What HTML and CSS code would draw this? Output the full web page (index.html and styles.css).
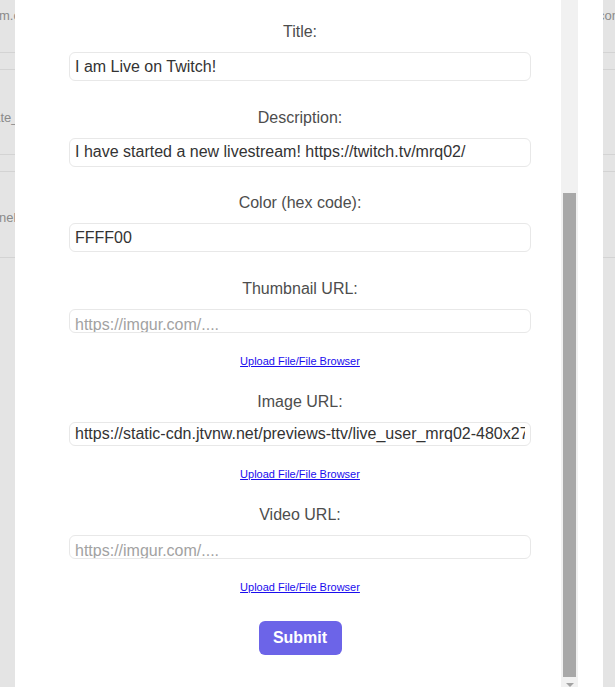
FILE: index.html
```html
<!DOCTYPE html>
<html lang="en">
<head>
    <meta charset="UTF-8">
    <meta name="viewport" content="width=device-width, initial-scale=1.0">
    <title>Go Live Notification</title>
    <link rel="stylesheet" href="styles.css">
</head>
<body>

    <!-- Notification list behind the modal -->
    <div class="page">
        <div class="row row-first">
            <div class="cell cell-left"><span>mrq02.stream.com</span></div>
            <div class="cell cell-right"><span>community</span></div>
        </div>
        <div class="row">
            <div class="cell cell-left"><span>go_live_template_live</span></div>
        </div>
        <div class="row row-last">
            <div class="cell cell-left"><span>stream_channel_url</span></div>
        </div>
    </div>

    <!-- Edit embed modal -->
    <div class="overlay">
        <div class="modal">
            <div class="modal-body">
                <form class="embed-form" id="embedForm">
                    <div class="field">
                        <label for="title">Title:</label>
                        <input class="text-input" type="text" id="title" name="title" value="I am Live on Twitch!">
                    </div>

                    <div class="field">
                        <label for="description">Description:</label>
                        <input class="text-input" type="text" id="description" name="description" value="I have started a new livestream! https://twitch.tv/mrq02/">
                    </div>

                    <div class="field">
                        <label for="color">Color (hex code):</label>
                        <input class="text-input" type="text" id="color" name="color" value="FFFF00">
                    </div>

                    <div class="field field-upload">
                        <label for="thumbnail">Thumbnail URL:</label>
                        <textarea class="url-input" id="thumbnail" name="thumbnail" rows="1" placeholder="https://imgur.com/...."></textarea>
                        <a class="upload-link" href="#">Upload File/File Browser</a>
                    </div>

                    <div class="field field-upload">
                        <label for="image">Image URL:</label>
                        <input class="url-input url-filled" type="text" id="image" name="image" value="https://static-cdn.jtvnw.net/previews-ttv/live_user_mrq02-480x270.jpg">
                        <a class="upload-link" href="#">Upload File/File Browser</a>
                    </div>

                    <div class="field field-upload">
                        <label for="video">Video URL:</label>
                        <textarea class="url-input" id="video" name="video" rows="1" placeholder="https://imgur.com/...."></textarea>
                        <a class="upload-link" href="#">Upload File/File Browser</a>
                    </div>

                    <button class="submit-button" type="submit">Submit</button>
                </form>
            </div>

            <!-- scrollbar of the modal, scrolled to the bottom -->
            <div class="scrollbar">
                <div class="thumb"></div>
                <div class="arrow-down"></div>
            </div>
        </div>
    </div>

</body>
</html>
```

FILE: styles.css
```css
body {
    font-family: "Liberation Sans", Arial, sans-serif;
    margin: 0;
    background-color: #e4e4e4;
    height: 100vh;
    overflow: hidden;
}

/* List rows behind the overlay */
.row {
    display: flex;
    justify-content: space-between;
    min-height: 86px;
    border-top: 1px solid #d3d3d3;
    border-bottom: 1px solid #d3d3d3;
    margin-bottom: 16px;
    padding-top: 40px;
    box-sizing: border-box;
    font-size: 13px;
    line-height: 16px;
    color: #8a8a8a;
}

.row-first {
    min-height: 53px;
    border-top: none;
    padding-top: 8px;
}

.row-last {
    padding-top: 38px;
    min-height: 87px;
}

.cell {
    overflow: hidden;
    white-space: nowrap;
    height: 16px;
}

.cell-left {
    width: 38px;
    display: flex;
    justify-content: flex-end;
}

.cell-right {
    width: 17px;
}

/* Modal */
.overlay {
    position: fixed;
    top: 0;
    left: 0;
    right: 0;
    bottom: 0;
    display: flex;
    padding: 0 12px 0 15px;
}

.modal {
    flex: 1;
    display: flex;
    background: #ffffff;
    padding-right: 25px;
}

.modal-body {
    flex: 1;
    padding: 22px 30px 0 54px;
    overflow: hidden;
}

.embed-form {
    display: flex;
    flex-direction: column;
}

.field {
    display: flex;
    flex-direction: column;
    margin-bottom: 26.5px;
}

.field-upload {
    margin-bottom: 24px;
}

label {
    text-align: center;
    font-size: 16px;
    line-height: 18px;
    color: #4d4d4d;
    padding-top: 1px;
    margin-bottom: 11px;
}

.text-input, .url-input {
    box-sizing: border-box;
    width: 100%;
    margin: 0;
    border: 1px solid #e8e8e8;
    border-radius: 6px;
    padding: 0 5px;
    font-family: "Liberation Sans", Arial, sans-serif;
    font-size: 16px;
    color: #333333;
    background: #ffffff;
    outline: none;
}

.text-input {
    height: 29px;
}

.url-input {
    height: 24px;
}

textarea.url-input {
    padding-top: 6px;
    line-height: 18px;
    resize: none;
    overflow: hidden;
}

.url-input::placeholder {
    color: #a2a2a2;
}

.upload-link {
    align-self: center;
    margin-top: 22px;
    font-size: 11px;
    line-height: 13px;
    color: #1a0dee;
}

.submit-button {
    align-self: center;
    width: 83px;
    height: 34px;
    margin-top: 3px;
    background-color: #6c64e8;
    border: none;
    border-radius: 6px;
    color: white;
    font-family: "Liberation Sans", Arial, sans-serif;
    font-size: 16px;
    font-weight: bold;
    cursor: pointer;
}

/* Scrollbar */
.scrollbar {
    width: 17px;
    background-color: #f1f1f1;
    display: flex;
    flex-direction: column;
    align-items: center;
    padding-top: 193px;
}

.thumb {
    width: 13px;
    height: 486px;
    background-color: #a8a8a8;
}

.arrow-down {
    width: 0;
    margin-top: 6px;
    border-left: 4px solid transparent;
    border-right: 4px solid transparent;
    border-top: 4px solid #a3a3a3;
}
```
